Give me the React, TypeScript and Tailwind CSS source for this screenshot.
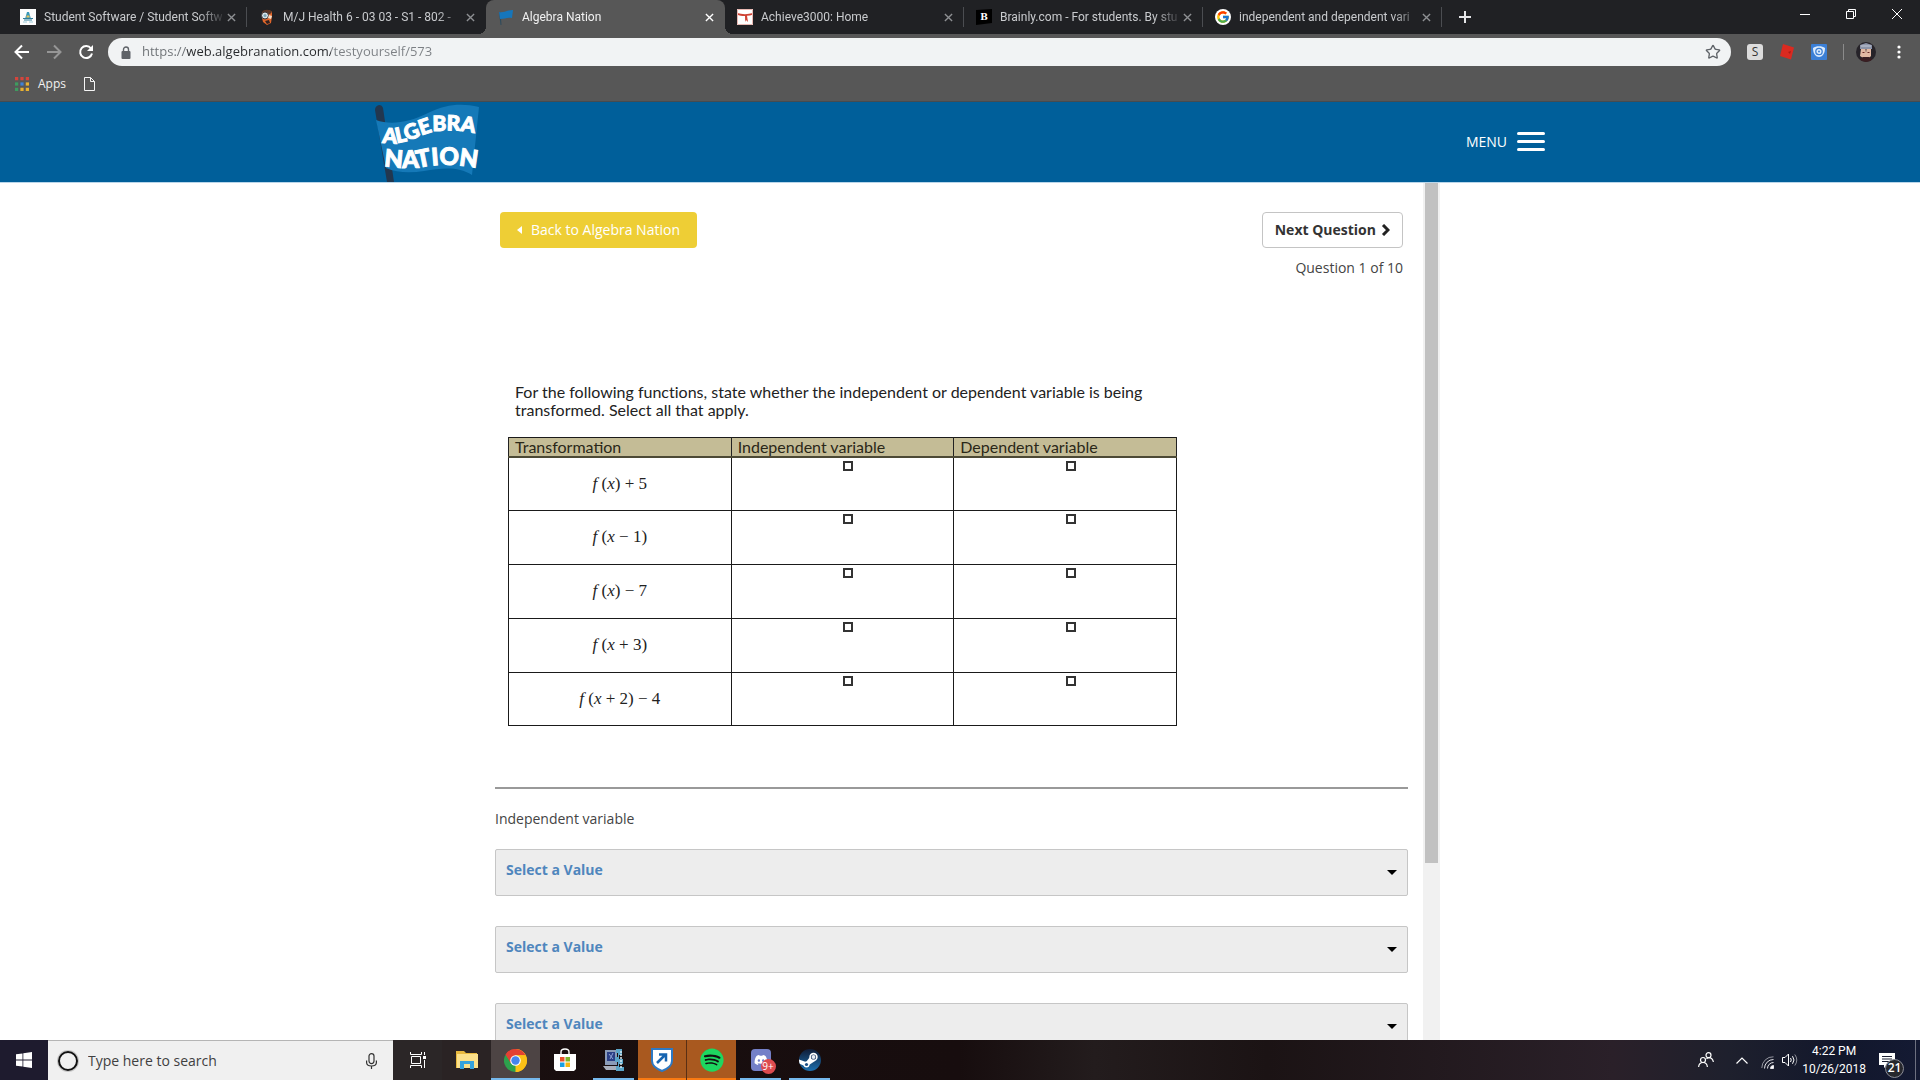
import React from "react";
import { FcGoogle } from "react-icons/fc";
import { FaDiscord, FaSpotify } from "react-icons/fa";
import { Star } from "lucide-react";

/* ---------- favicons ---------- */

const SchoolIcon = () => (
  <svg viewBox="0 0 16 16" className="size-4">
    <rect width="16" height="16" fill="#fdfdfd" />
    <path d="M5 10 7 3h2l2 7z" fill="#3a98b8" />
    <path d="M6.5 6.5h3v2h-3z" fill="#e5c35c" />
    <path d="M3 9.5h10M4 11h8" stroke="#2f7e9c" strokeWidth="1" />
    <path d="M3 13h4M9 13h4" stroke="#9ccbd9" strokeWidth="1" />
  </svg>
);

const MascotIcon = () => (
  <svg viewBox="0 0 16 16" className="size-4">
    <path d="M3 4c1-3 8-4 10-1v4l-1 7-4 2-4-3-1-4z" fill="#e0662a" />
    <path d="M3 3c2-3 8-3 10 0l-2 2H5z" fill="#5b3626" />
    <circle cx="6" cy="6.500" r="3.500" fill="#d5e3e8" stroke="#3d3434" />
    <circle cx="6" cy="6.500" r="1.500" fill="#7fa5b5" />
    <path d="M10 6l3 1-1 3-3-1z" fill="#f6dcc6" />
    <path d="M6 12l4-1 1 3-3 1z" fill="#2d2020" />
  </svg>
);

const FlagIcon = () => (
  <svg viewBox="0 0 16 16" className="size-4">
    <path d="M1 3h1.500l1 13H2.500z" fill="#2f4b5c" />
    <path d="M1 3c5 1 8-2 14-2l-1 8c-5-1-7 1-12 1z" fill="#1676bb" />
  </svg>
);

const AchieveIcon = () => (
  <svg viewBox="0 0 16 16" className="size-4">
    <rect width="16" height="16" fill="#fff" />
    <path d="M0 4c5 1.500 11 1.500 16 0v1.500c-2 .8-4 1.200-6 1.300L11 13l-2-2-.8 2L8 7C5 7 2 6.500 0 5.500z" fill="#cf4334" />
    <path d="M.5.5h15v15H.5z" fill="none" stroke="#e9b9b3" />
  </svg>
);

const BrainlyIcon = () => (
  <svg viewBox="0 0 16 16" className="size-4">
    <path d="M0 1 16 0v14L0 16z" fill="#000" />
    <text x="8" y="11" textAnchor="middle" fontSize="9" fontWeight="700" fill="#fff" fontFamily="DejaVu Serif, serif">B</text>
  </svg>
);

const GoogleIcon = () => (
  <span className="flex size-4 items-center justify-center rounded-full bg-white">
    <FcGoogle className="size-3.5" />
  </span>
);

const Cross = ({ className }: { className: string }) => (
  <svg viewBox="0 0 10 10" className={className} fill="none" stroke="currentColor" strokeWidth="1.5">
    <path d="M1 1l8 8M9 1L1 9" />
  </svg>
);

const tabs = [
  { title: "Student Software / Student Softw", icon: <SchoolIcon /> },
  { title: "M/J Health 6 - 03 03 - S1 - 802 -", icon: <MascotIcon /> },
  { title: "Algebra Nation", icon: <FlagIcon />, active: true },
  { title: "Achieve3000: Home", icon: <AchieveIcon /> },
  { title: "Brainly.com - For students. By stu", icon: <BrainlyIcon /> },
  { title: "independent and dependent vari", icon: <GoogleIcon /> },
];

function TabStrip() {
  return (
    <div className="flex h-[34px] shrink-0 bg-[#202124] pl-2 font-[Roboto] text-xs">
      {tabs.map((t, i) => (
        <div
          key={t.title}
          className={
            t.active
              ? "relative flex w-[239px] items-center gap-2 rounded-t-lg bg-[#575757] pr-[9px] pl-3 text-[#f1f1f1]"
              : "relative flex w-[239px] items-center gap-2 pr-[9px] pl-3 text-[#c9cbce]"
          }
        >
          {t.icon}
          <button className="-mr-1.5 min-w-0 flex-1 overflow-hidden text-left whitespace-nowrap [mask-image:linear-gradient(to_right,black_86%,transparent_102%)]">
            {t.title}
          </button>
          <button aria-label="Close tab" className="p-0.5">
            <Cross className={t.active ? "size-[9px] text-white" : "size-[9px] text-[#8e9093]"} />
          </button>
          {t.active ? (
            <>
              <span className="absolute bottom-0 -left-2 size-2 bg-[radial-gradient(circle_at_top_left,transparent_8px,#575757_8px)]" />
              <span className="absolute -right-2 bottom-0 size-2 bg-[radial-gradient(circle_at_top_right,transparent_8px,#575757_8px)]" />
            </>
          ) : (
            i !== 1 && <span className="absolute top-[7px] right-0 h-5 w-px bg-[#4b4d51]" />
          )}
        </div>
      ))}
      <button aria-label="New tab" className="ml-[17px] flex items-center">
        <svg viewBox="0 0 12 12" className="size-3" stroke="#e4e5e7" strokeWidth="2">
          <path d="M6 0v12M0 6h12" />
        </svg>
      </button>
      <div className="ml-auto flex h-7 items-center">
        <button aria-label="Minimize" className="flex w-[46px] justify-center">
          <svg viewBox="0 0 10 10" className="size-[10px]" stroke="#fff"><path d="M0 5.500h10" /></svg>
        </button>
        <button aria-label="Restore" className="flex w-[46px] justify-center">
          <svg viewBox="0 0 10 10" className="size-[10px]" fill="none" stroke="#fff">
            <path d="M.5 2.500h7v7h-7zM2.500 2.500v-2h7v7h-2" />
          </svg>
        </button>
        <button aria-label="Close" className="flex w-[46px] justify-center">
          <svg viewBox="0 0 10 10" className="size-[10px]" stroke="#fff"><path d="M0 0l10 10M10 0L0 10" /></svg>
        </button>
      </div>
    </div>
  );
}

function Toolbar() {
  return (
    <div className="shrink-0 border-b border-[#454b50] bg-[#575757] pt-1">
      <div className="flex h-7 items-center pl-[14px]">
        <button aria-label="Back" className="w-8">
          <svg viewBox="0 0 16 16" className="size-4" fill="none" stroke="#fff" strokeWidth="2"><path d="M15 8H2M8 1.500L1.500 8 8 14.500" /></svg>
        </button>
        <button aria-label="Forward" className="w-8">
          <svg viewBox="0 0 16 16" className="size-4" fill="none" stroke="#969696" strokeWidth="2"><path d="M1 8h13M8 1.500L14.500 8 8 14.500" /></svg>
        </button>
        <button aria-label="Reload" className="w-[30px]">
          <svg viewBox="0 0 16 16" className="size-4">
            <path d="M13 4.500A6 6 0 1 0 14 9.500" fill="none" stroke="#fff" strokeWidth="2" />
            <path d="M15 1v6H9z" fill="#fff" />
          </svg>
        </button>
        <div className="flex h-full flex-1 items-center rounded-full bg-[#f1f3f4] pr-[10px] pl-[13px]">
          <svg viewBox="0 0 10 13" className="w-[10px]">
            <path d="M2.500 6V3.500a2.500 2.500 0 0 1 5 0V6" fill="none" stroke="#5f6368" strokeWidth="1.4" />
            <rect x="0.500" y="5" width="9" height="8" rx="1" fill="#5f6368" />
          </svg>
          <input
            aria-label="Address"
            defaultValue="https://web.algebranation.com/testyourself/573"
            className="ml-[11px] flex-1 bg-[linear-gradient(to_right,#6b6f73_44px,#27292c_44px,#27292c_189px,#7c8084_189px)] bg-clip-text text-[13px] text-transparent outline-none"
          />
          <button aria-label="Bookmark this page"><Star className="size-4 text-[#5f6368]" strokeWidth={2} /></button>
        </div>
        <div className="flex items-center gap-4 pr-[10px] pl-4">
          <button className="size-4 rounded-[3px] bg-[#dcdcdc] text-xs leading-4 text-[#333]">S</button>
          <button aria-label="Extension">
            <svg viewBox="0 0 16 16" className="size-4">
              <path d="M4 0l11 3.500-3 12L1 12z" fill="#da2a20" />
              <path d="M9 8l3-1-1 3z" fill="#a91c16" />
            </svg>
          </button>
          <button aria-label="Extension">
            <svg viewBox="0 0 16 16" className="size-4">
              <rect width="16" height="16" rx="1" fill="#3b7fd6" />
              <path d="M2 4c3-2.500 9-2.500 12 0 0 6-3 9-6 9S2 10 2 4z" fill="#dcebfc" />
              <circle cx="8" cy="7.500" r="3.200" fill="none" stroke="#3b7fd6" strokeWidth="1.300" />
              <circle cx="8" cy="7.500" r="1" fill="#3b7fd6" />
            </svg>
          </button>
          <span className="h-4 w-px bg-[#8b8b8b]" />
          <button aria-label="Profile" className="-mx-1">
            <svg viewBox="0 0 20 20" className="size-5">
              <clipPath id="avatar"><circle cx="10" cy="10" r="10" /></clipPath>
              <g clipPath="url(#avatar)">
                <rect width="20" height="20" fill="#262329" />
                <path d="M5 7h10v7l-2 2H7l-3-2z" fill="#e3b9a3" />
                <path d="M4 3l6-2 6 2v4H4z" fill="#8c94a8" />
                <path d="M5 4h10" stroke="#c2c8d6" />
                <path d="M6.500 10.500h2M11.500 10.500h2" stroke="#6b2b28" />
                <path d="M9.500 7l.5 4 .5-4z" fill="#2a2327" />
                <path d="M4 17l3-2h6l3 2v3H4z" fill="#3a1e22" />
              </g>
            </svg>
          </button>
          <button aria-label="Chrome menu" className="px-1">
            <svg viewBox="0 0 14 14" className="size-[14px]" fill="#fff">
              <circle cx="7" cy="2" r="1.600" /><circle cx="7" cy="7" r="1.600" /><circle cx="7" cy="12" r="1.600" />
            </svg>
          </button>
        </div>
      </div>
      <div className="flex h-[35px] items-center pl-[15px] text-xs text-[#f1f1f1]">
        <button className="flex items-center gap-[9px]">
          <svg viewBox="0 0 13 13" className="size-[14px]">
            <path d="M0 0h3v3H0zM5 0h3v3H5zM10 0h3v3h-3z" fill="#d5453c" />
            <path d="M0 5h3v3H0z" fill="#3f9b5f" /><path d="M5 5h3v3H5z" fill="#3f82d8" /><path d="M10 5h3v3h-3z" fill="#e8b131" />
            <path d="M0 10h3v3H0z" fill="#3f9b5f" /><path d="M5 10h3v3H5zM10 10h3v3h-3z" fill="#e8b131" />
          </svg>
          Apps
        </button>
        <button aria-label="Bookmark" className="ml-[18px]">
          <svg viewBox="0 0 11 14" className="h-[14px] w-[11px]" fill="none" stroke="#f5f5f5"><path d="M.5.5h6l4 4v9H.5zM6.500.5v4h4" /></svg>
        </button>
      </div>
    </div>
  );
}

const Logo = () => (
  <svg viewBox="0 0 105 80" className="h-20 w-[105px]" role="img" aria-label="Algebra Nation">
    <path d="M0 8q0-4 4-5 3 0 4 3l11 74h-7z" fill="#22374f" />
    <path d="M1 18c14 5 32 3 52-7C72 2 86 1 104 5l-7 68c-14-9-30-7-48-4-13 2-27 2-38-3z" fill="#1579b8" />
    <path id="logo-top" d="M7 40C31 46 47 29 65 29Q83 27 103 32" fill="none" />
    <path id="logo-bottom" d="M9 64Q26 67 48 65Q70 60 102 66" fill="none" />
    <g fill="#fff" stroke="#fff" strokeWidth="1" fontFamily="Lato, sans-serif" fontWeight="900">
      <text fontSize="21"><textPath href="#logo-top">ALGEBRA</textPath></text>
      <text fontSize="24"><textPath href="#logo-bottom">NATION</textPath></text>
    </g>
  </svg>
);

function SiteHeader() {
  return (
    <header className="shrink-0 border-b border-[#b9d6ea] bg-[#005f9a]">
      <div className="mx-auto flex h-20 max-w-[1170px] items-center justify-between">
        <a href="#home"><Logo /></a>
        <button className="flex items-center gap-[10px] text-sm text-white">
          MENU
          <span className="flex w-7 flex-col gap-[5px] pb-0.5">
            <span className="h-[3px] rounded-full bg-white" />
            <span className="h-[3px] rounded-full bg-white" />
            <span className="h-[3px] rounded-full bg-white" />
          </span>
        </button>
      </div>
    </header>
  );
}

const F = ({ arg, rest }: { arg: string; rest?: string }) => (
  <>
    <i>f</i> (<i>x</i>{arg}){rest}
  </>
);

const rows = [
  { name: "f(x)+5", f: <F arg="" rest=" + 5" /> },
  { name: "f(x-1)", f: <F arg=" − 1" /> },
  { name: "f(x)-7", f: <F arg="" rest=" − 7" /> },
  { name: "f(x+3)", f: <F arg=" + 3" /> },
  { name: "f(x+2)-4", f: <F arg=" + 2" rest=" − 4" /> },
];

function QuestionTable() {
  return (
    <table className="ml-[13px] w-[669px] table-fixed border-collapse border border-[#1a1a1a]">
      <thead>
        <tr className="h-[19px] border-b-2 border-[#4c4935] bg-[#c4bc96] text-left font-[Lato] text-base leading-4 text-[#2a2718]">
          {["Transformation", "Independent variable", "Dependent variable"].map((h) => (
            <th key={h} className="border-x border-[#222] px-[6px] font-normal">{h}</th>
          ))}
        </tr>
      </thead>
      <tbody>
        {rows.map((r) => (
          <tr key={r.name} className="h-[54px] border-b border-[#1a1a1a] last:h-[53px]">
            <td className="border-x border-[#1a1a1a] text-center font-['Liberation_Serif'] text-[17px] text-[#222]">{r.f}</td>
            {["independent", "dependent"].map((k) => (
              <td key={k} className="border-x border-[#1a1a1a] pt-[3px] pl-3 text-center align-top">
                <input type="checkbox" aria-label={r.name + " " + k} className="mx-auto block size-[10px] appearance-none border-2 border-[#333]" />
              </td>
            ))}
          </tr>
        ))}
      </tbody>
    </table>
  );
}

const ValueSelect = ({ label }: { label: string }) => (
  <div className="relative">
    <select
      aria-label={label}
      className="block h-[47px] w-full appearance-none rounded-xs border border-[#c6c6c6] bg-[#ededed] pr-8 pb-[5px] pl-[10px] text-sm font-bold text-[#4f86bd]"
    >
      <option>Select a Value</option>
    </select>
    <svg viewBox="0 0 10 5" className="pointer-events-none absolute top-[21px] right-[11px] w-[10px]"><path d="M0 0h10L5 5z" /></svg>
  </div>
);

function Content() {
  return (
    <main className="flex min-h-0 flex-1 justify-center bg-white">
      <div className="flex w-full max-w-[960px]">
        <div className="min-w-0 flex-1 overflow-hidden px-[15px] pt-[29px] text-sm text-[#444]">
          <div className="flex items-start justify-between px-[5px]">
            <a href="#back" className="flex h-9 items-center gap-[9px] rounded bg-[#eece35] px-[17px] text-white">
              <svg viewBox="0 0 5 8" className="h-2 w-[5px]" fill="#fff"><path d="M5 0v8L0 4z" /></svg>
              Back to Algebra Nation
            </a>
            <div className="flex flex-col items-end gap-[10px]">
              <button className="flex h-9 items-center gap-[5px] rounded border border-[#c4c4c4] px-3 font-bold text-[#333]">
                Next Question
                <svg viewBox="0 0 9 12" className="h-3 w-[9px]" fill="none" stroke="#222" strokeWidth="3"><path d="M2 1l5 5-5 5" /></svg>
              </button>
              <p>Question 1 of 10</p>
            </div>
          </div>
          <p className="mt-[105px] mb-[18px] ml-5 max-w-[700px] font-[Lato] text-base leading-[18px] text-[#222] [font-variant-ligatures:none]">
            For the following functions, state whether the independent or dependent variable is being
            <br />
            transformed. Select all that apply.
          </p>
          <QuestionTable />
          <hr className="mt-[61px] border-t-2 border-[#999]" />
          <p className="my-5">Independent variable</p>
          <div className="flex flex-col gap-[30px]">
            <ValueSelect label="First value" />
            <ValueSelect label="Second value" />
            <ValueSelect label="Third value" />
          </div>
        </div>
        <div className="w-[17px] bg-[#f1f1f1] px-0.5"><div className="h-[680px] max-h-full bg-[#c1c1c1]" /></div>
      </div>
    </main>
  );
}

/* ---------- taskbar ---------- */

const TaskViewIcon = () => (
  <svg viewBox="0 0 18 16" className="h-4 w-[18px]" fill="none" stroke="#fff">
    <path d="M2.500 4.500h9v7h-9zM1.500 0v2.500h11V0M1.500 16v-2.500h11V16M15.500 0v3M15.500 8v8" />
    <path d="M14 4h3v3h-3z" fill="#fff" stroke="none" />
  </svg>
);

const FolderIcon = () => (
  <svg viewBox="0 0 22 20" className="h-5 w-[22px]">
    <path d="M0 1h8l2 2h11v15H0z" fill="#e8b93f" />
    <path d="M1 4h21v14H1z" fill="#fbe08a" />
    <path d="M4 19v-8h14v8h-4v-5H8v5z" fill="#35a2dc" />
  </svg>
);

const ChromeIcon = () => (
  <svg viewBox="0 0 24 24" className="size-[23px]">
    <path d="M12 12 1.600 6A12 12 0 0 1 22.400 6z" fill="#e34133" />
    <path d="M12 12V0a12 12 0 0 1 0 24l-1-1z" fill="#fbc116" />
    <path d="M12 12 12 24A12 12 0 0 1 1.600 6z" fill="#2da14c" />
    <path d="M12 0a12 12 0 0 1 10.400 6.500H12L7 14.500 1.600 6A12 12 0 0 1 12 0z" fill="#e34133" />
    <path d="M12 6.500h10.600A12 12 0 0 1 12 24l5-9z" fill="#fbc116" />
    <circle cx="12" cy="12" r="5.500" fill="#fff" />
    <circle cx="12" cy="12" r="4.400" fill="#4584ee" />
  </svg>
);

const StoreIcon = () => (
  <svg viewBox="0 0 24 24" className="size-6">
    <path d="M8 8V4q0-3 4-3t4 3v4" fill="none" stroke="#fff" strokeWidth="1.400" />
    <path d="M1 6h22v15l-2 2H3l-2-2z" fill="#fff" />
    <path d="M7 9h4.500v4.500H7z" fill="#e8512b" /><path d="M12.500 9H17v4.500h-4.500z" fill="#7cb52a" />
    <path d="M7 14.500h4.500V19H7z" fill="#19a0e3" /><path d="M12.500 14.500H17V19h-4.500z" fill="#f6b70f" />
  </svg>
);

const ZipIcon = () => (
  <svg viewBox="0 0 22 24" className="h-6 w-[22px]">
    <path d="M2 2h12v15H2z" fill="#8a9bb8" /><path d="M4 4h8v9H4z" fill="#2b3f86" />
    <path d="M0 18h14v4H3z" fill="#a8aebb" /><path d="M6 6l4 5M10 5l-3 6" stroke="#8fa3d6" />
    <path d="M13 1h6v6h-3v4h4v5h-4v3h5v4h-8v-5h2v-4h-3V9h3V5h-2z" fill="#5ba4c7" />
    <path d="M18 3v18" stroke="#d7eaf3" strokeWidth="1.500" strokeDasharray="2 1" />
  </svg>
);

const ShieldIcon = () => (
  <svg viewBox="0 0 22 24" className="h-6 w-[22px]">
    <path d="M1 1h20v12q0 6-10 10Q1 19 1 13z" fill="#fff" stroke="#2d79c4" strokeWidth="2" />
    <path d="M6 15l8-8M8 6.500h7v7" fill="none" stroke="#1764b0" strokeWidth="2.500" />
  </svg>
);

const DiscordIcon = () => (
  <span className="relative flex h-[22px] w-5 items-center justify-center rounded bg-[#7480c8] text-white">
    <FaDiscord className="size-[14px]" />
    <span className="absolute -right-[5px] -bottom-[3px] flex size-[15px] items-center justify-center rounded-full bg-[#dd4b50] text-[10px]">9+</span>
  </span>
);

const SpotifyIcon = () => (
  <span className="flex size-[22px] items-center justify-center rounded-full bg-[#111]">
    <FaSpotify className="size-6 shrink-0 text-[#1ed760]" />
  </span>
);

/* Dark blue disc with a white piston arm reaching in from the left. */
const SteamIcon = () => (
  <svg viewBox="0 0 22 22" className="size-[22px]">
    <defs>
      <linearGradient id="steam" x1="0" y1="0" x2="0" y2="1">
        <stop offset="0" stopColor="#101c36" /><stop offset="1" stopColor="#1c6fae" />
      </linearGradient>
      <clipPath id="steam-disc"><circle cx="11" cy="11" r="11" /></clipPath>
    </defs>
    <circle cx="11" cy="11" r="11" fill="url(#steam)" />
    <g clipPath="url(#steam-disc)">
      <path d="M-1 10l8 3 4-5 5 4-6 4-2 2-9-4z" fill="#fff" />
      <circle cx="7.500" cy="15.500" r="3" fill="#fff" /><circle cx="7.500" cy="15.500" r="1.600" fill="#1b4f84" />
      <circle cx="14.500" cy="8" r="4.200" fill="#fff" /><circle cx="14.500" cy="8" r="2.600" fill="#15305a" />
      <circle cx="14.500" cy="8" r="2" fill="#e8eef6" />
    </g>
  </svg>
);

const apps = [
  { name: "Task View", icon: <TaskViewIcon />, cell: "bg-[#2b2627]", bar: "hidden" },
  { name: "File Explorer", icon: <FolderIcon />, cell: "bg-[#2a2324]", bar: "hidden" },
  { name: "Chrome", icon: <ChromeIcon />, cell: "bg-[#4d4444]", bar: "inset-x-0 bg-[#76b9ed]" },
  { name: "Store", icon: <StoreIcon />, cell: "", bar: "hidden" },
  { name: "Archive", icon: <ZipIcon />, cell: "", bar: "inset-x-1 bg-[#76b9ed]" },
  { name: "Shield", icon: <ShieldIcon />, cell: "bg-[#a9591f] border-r border-[#5a2f14]", bar: "inset-x-0 bg-[#f97a12]" },
  { name: "Spotify", icon: <SpotifyIcon />, cell: "bg-[#a9591f]", bar: "inset-x-0 bg-[#f97a12]" },
  { name: "Discord", icon: <DiscordIcon />, cell: "", bar: "inset-x-1 bg-[#76b9ed]" },
  { name: "Steam", icon: <SteamIcon />, cell: "", bar: "inset-x-1 bg-[#76b9ed]" },
];

function Taskbar() {
  return (
    <footer className="flex h-10 shrink-0 bg-[linear-gradient(to_right,#1b1010_0%,#170d0e_50%,#231c1d_57%,#1b1314_66%,#2a2029_84%,#1e202d_90%,#12172c_96%,#141a33_100%)] text-white">
      <button aria-label="Start" className="flex w-12 items-center justify-center bg-[#1e1b2e]">
        <svg viewBox="0 0 16 16" className="size-4" fill="#fff"><path d="M0 2.300 6.500 1.400v6.200H0zM7.300 1.300 16 0v7.600H7.300zM0 8.400h6.500v6.200L0 13.700zM7.300 8.400H16V16l-8.700-1.300z" /></svg>
      </button>
      <label className="flex w-[345px] items-center border-t border-[#b5b5b5] bg-[#f0f0f0] pr-4 pl-[10px]">
        <span className="size-5 rounded-full border-2 border-[#111] ring-1 ring-[#888]/40" />
        <input
          aria-label="Search"
          placeholder="Type here to search"
          className="ml-[10px] min-w-0 flex-1 bg-transparent text-sm text-[#333] outline-none placeholder:text-[#404040]"
        />
        <svg viewBox="0 0 11 16" className="h-4 w-[11px]" fill="none" stroke="#333" strokeWidth="1.200">
          <rect x="3" y=".6" width="5" height="10" rx="2.500" /><path d="M.6 7.500v2q0 3.500 4.900 3.500t4.900-3.500v-2M5.500 13v3" />
        </svg>
      </label>
      {apps.map((a) => (
        <button key={a.name} aria-label={a.name} className={"relative flex w-[49px] items-center justify-center " + a.cell}>
          {a.icon}
          <span className={"absolute bottom-0 h-0.5 " + a.bar} />
        </button>
      ))}
      <div className="ml-auto flex items-center pr-1">
        <button aria-label="People" className="mr-[22px]">
          <svg viewBox="0 0 16 16" className="size-4" fill="none" stroke="#fff" strokeWidth="1.200">
            <circle cx="5" cy="8" r="2.500" /><path d="M.6 15q.4-4.500 4.400-4.500T9.400 15" />
            <circle cx="10.500" cy="3.200" r="2.500" /><path d="M8.500 7q1-1.300 2.500-1.300 3.500 0 4.400 4.300" />
          </svg>
        </button>
        <button aria-label="Show hidden icons" className="mr-[13px]">
          <svg viewBox="0 0 12 7" className="w-3" fill="none" stroke="#fff" strokeWidth="1.200"><path d="M.5 6.500 6 1l5.500 5.500" /></svg>
        </button>
        <button aria-label="Network" className="mr-2">
          <svg viewBox="0 0 13 13" className="mt-1 size-[13px]" fill="none" stroke="#e5e5ea">
            <path d="M.8 12A11.200 11.200 0 0 1 12.500.8" opacity=".6" /><path d="M3.500 12.500A9 9 0 0 1 12.500 3.500M6.500 12.500a6 6 0 0 1 6-6" />
            <path d="M9.500 12.500a3 3 0 0 1 3-3v3z" fill="#fff" />
          </svg>
        </button>
        <button aria-label="Volume" className="mr-1">
          <svg viewBox="0 0 16 14" className="w-4" fill="none" stroke="#fff">
            <path d="M.5 4.500H3L6.500 1v12L3 9.500H.5z" /><path d="M8.500 5q1.500 2 0 4M10.500 3.200q3 3.800 0 7.600" /><path d="M12.800 1.500q4 5.500 0 11" opacity=".5" />
          </svg>
        </button>
        <div className="mr-[13px] text-center font-[Roboto] text-xs leading-[18px]">4:22 PM<br />10/26/2018</div>
        <button aria-label="Notifications" className="relative mr-[20px]">
          <svg viewBox="0 0 16 15" className="w-4">
            <path d="M0 0h16v12H8l-3 3v-3H0z" fill="#fff" /><path d="M3 3.500h10M3 6h10M3 8.500h7" stroke="#1b2033" />
          </svg>
          <span className="absolute top-[6px] left-[6px] flex size-[19px] items-center justify-center rounded-full border border-[#8b8d96] bg-[#26272d] text-xs font-semibold">21</span>
        </button>
        <span className="h-10 w-px bg-[#6d7080]" />
      </div>
    </footer>
  );
}

export default function App() {
  return (
    <div className="flex h-screen flex-col overflow-hidden font-['Open_Sans',sans-serif]">
      <TabStrip />
      <Toolbar />
      <SiteHeader />
      <Content />
      <Taskbar />
    </div>
  );
}
